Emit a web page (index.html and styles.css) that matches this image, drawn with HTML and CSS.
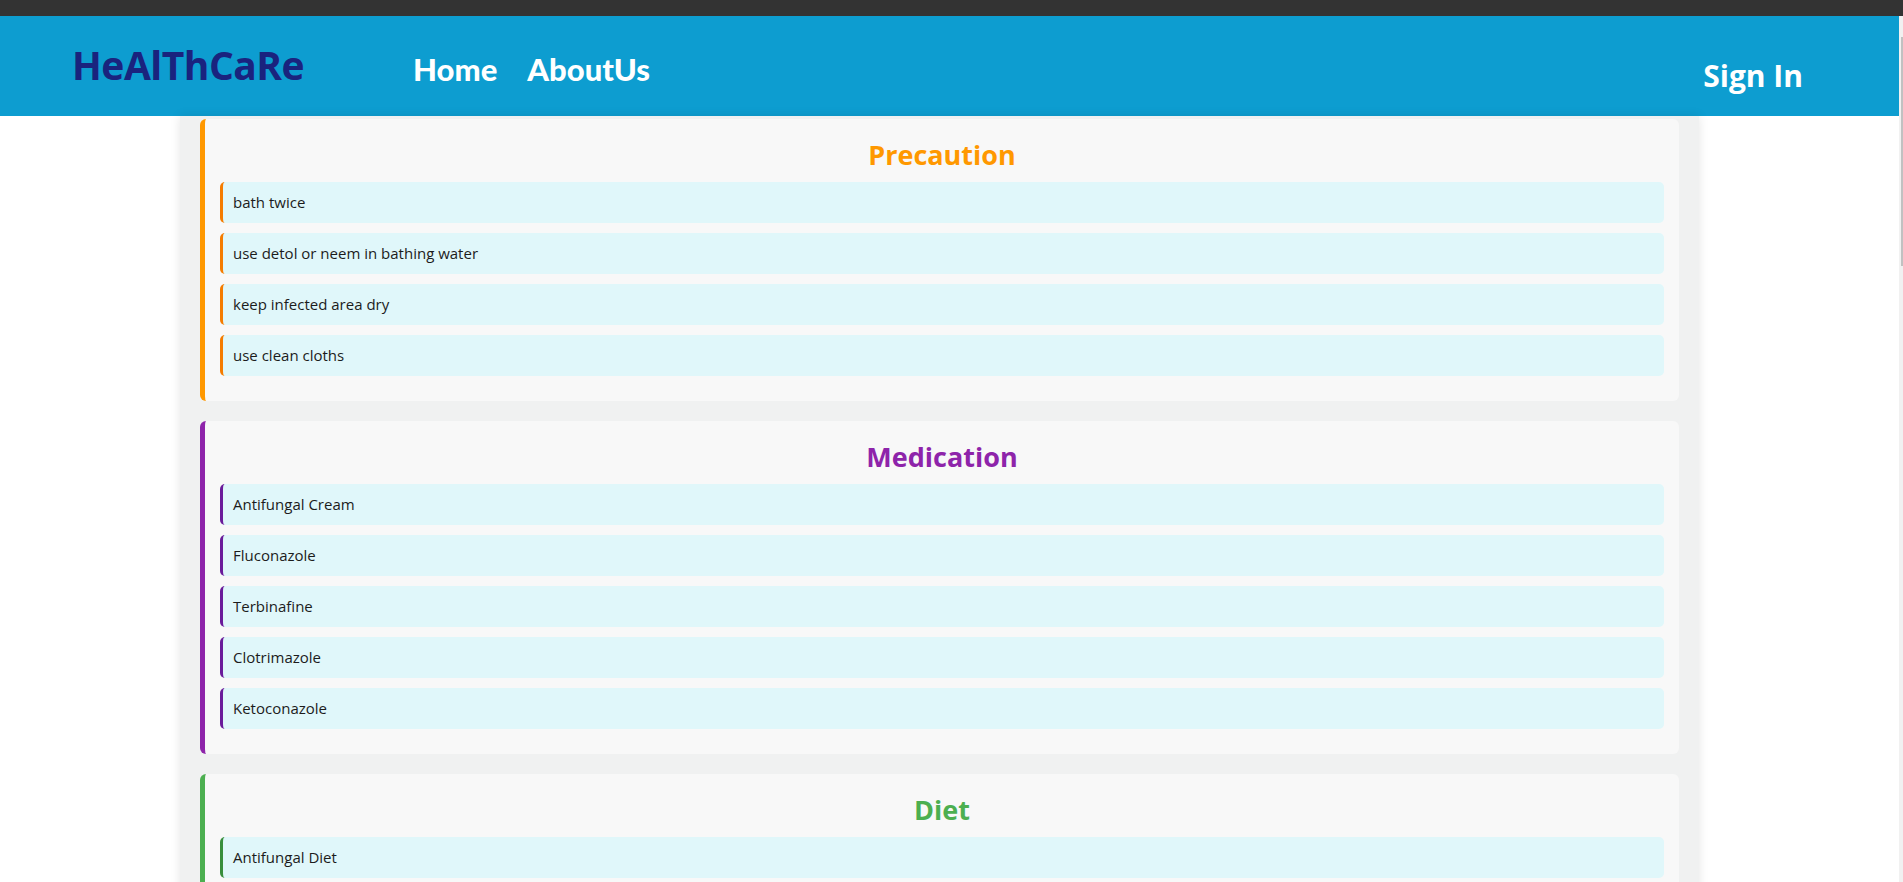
FILE: index.html
```html
<!DOCTYPE html>
<html lang="en">
<head>
<meta charset="utf-8">
<title>HeAlThCaRe</title>
<link rel="stylesheet" href="styles.css">
</head>
<body>
<div class="topstrip"></div>
<div class="frame">
  <div class="page">
    <header class="navbar">
      <div class="logo">HeAlThCaRe</div>
      <nav class="links">
        <a href="#" class="link">Home</a>
        <a href="#" class="link">AboutUs</a>
      </nav>
      <a href="#" class="signin">Sign In</a>
    </header>
    <main class="container">
      <section class="card card-orange">
        <h2 class="card-title">Precaution</h2>
        <div class="item">bath twice</div>
        <div class="item">use detol or neem in bathing water</div>
        <div class="item">keep infected area dry</div>
        <div class="item">use clean cloths</div>
      </section>
      <section class="card card-purple">
        <h2 class="card-title">Medication</h2>
        <div class="item">Antifungal Cream</div>
        <div class="item">Fluconazole</div>
        <div class="item">Terbinafine</div>
        <div class="item">Clotrimazole</div>
        <div class="item">Ketoconazole</div>
      </section>
      <section class="card card-green">
        <h2 class="card-title">Diet</h2>
        <div class="item">Antifungal Diet</div>
        <div class="item">Probiotics</div>
        <div class="item">Garlic</div>
      </section>
    </main>
  </div>
  <div class="scrollbar"><div class="thumb"></div></div>
</div>
</body>
</html>
```
FILE: styles.css
```css
html, body {
  margin: 0;
  padding: 0;
  height: 882px;
  overflow: hidden;
  background: #ffffff;
  font-family: "Open Sans", "Noto Sans", sans-serif;
}

.topstrip {
  height: 16px;
  background: #333333;
}

.frame {
  display: flex;
  height: 866px;
}

.page {
  flex: 1;
  min-width: 0;
  overflow: hidden;
}

.scrollbar {
  width: 4px;
  background: #f1f1f1;
  display: flex;
  justify-content: flex-end;
}

.thumb {
  width: 2px;
  height: 229px;
  margin-top: 21px;
  background: #c1c1c1;
}

.navbar {
  height: 100px;
  background: #0d9dd0;
  display: flex;
  align-items: center;
}

.logo {
  margin-left: 72px;
  font-size: 39px;
  font-weight: 700;
  color: #1a237e;
  letter-spacing: -0.5px;
  line-height: 1;
  margin-top: -4px;
}

.links {
  display: flex;
  gap: 30px;
  margin-left: 109px;
  margin-top: 7px;
}

.link {
  color: #ffffff;
  text-decoration: none;
  font-family: Lato, "Open Sans", sans-serif;
  font-weight: 900;
  font-size: 31px;
  line-height: 1;
}

.signin {
  margin-left: auto;
  margin-right: 96px;
  margin-top: 19px;
  color: #ffffff;
  text-decoration: none;
  font-weight: 700;
  font-size: 30px;
  line-height: 1;
}

.container {
  width: 1479px;
  margin-left: 180px;
  padding: 3px 20px 20px;
  background: #f0f1f1;
  box-shadow: 0 0 10px rgba(0, 0, 0, 0.1);
}

.card {
  background: #f8f8f8;
  border-radius: 6px;
  border-left: 5px solid #ff9800;
  padding: 15px;
  margin-bottom: 20px;
}

.card-title {
  margin: 3px 0 9px;
  text-align: center;
  font-size: 27px;
  line-height: 36px;
  font-weight: 700;
}

.item {
  background: #e0f7fa;
  border-left: 3px solid #f57c00;
  border-radius: 5px;
  padding: 10px;
  margin-bottom: 10px;
  font-size: 15px;
  line-height: 21px;
  color: #1c1c1c;
}

.card-orange { border-left-color: #ff9800; }
.card-orange .card-title { color: #ff9800; }
.card-orange .item { border-left-color: #f57c00; }

.card-purple { border-left-color: #8e24aa; }
.card-purple .card-title { color: #8e24aa; }
.card-purple .item { border-left-color: #6a1b9a; }

.card-green { border-left-color: #4caf50; }
.card-green .card-title { color: #4caf50; }
.card-green .item { border-left-color: #388e3c; }
```
